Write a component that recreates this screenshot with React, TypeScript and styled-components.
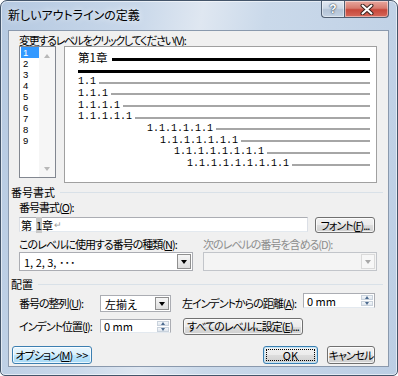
import React from 'react'
import styled, { createGlobalStyle, css } from 'styled-components'

const UI_FONT = `"Noto Sans CJK JP", "Noto Sans", sans-serif`

const GlobalStyle = createGlobalStyle`
  html, body { margin: 0; padding: 0; background: #ffffff; }
  body { font-family: ${UI_FONT}; font-feature-settings: "palt"; color: #000; }
  * { box-sizing: border-box; }
`

const Window = styled.div`
  width: 398px;
  height: 376px;
  display: flex;
  flex-direction: column;
  border: 1px solid #44556a;
  border-radius: 7px 7px 5px 5px;
  background: linear-gradient(100deg, #b5c9e1 0%, #c9d8ea 30%, #dfe7f1 44%, #cad9ea 58%, #bccee4 100%);
  box-shadow: inset 0 0 0 1px rgba(255, 255, 255, 0.55);
  overflow: hidden;
`

const TitleBar = styled.div`
  height: 29px;
  flex-shrink: 0;
  display: flex;
  align-items: flex-start;
`

const Title = styled.div`
  flex: 1;
  padding-left: 7px;
  line-height: 28px;
  font-size: 12px;
  text-shadow: 0 0 6px rgba(255, 255, 255, 0.95);
`

const CaptionButtons = styled.div`
  display: flex;
  margin-right: 8px;
`

const CaptionButton = styled.div<{ $w: number; $close?: boolean }>`
  width: ${p => p.$w}px;
  height: 17px;
  display: flex;
  align-items: center;
  justify-content: center;
  border: 1px solid #505f72;
  border-top: none;
  ${p =>
    p.$close
      ? css`
          border-radius: 0 0 4px 0;
          background: linear-gradient(#e8a89f 0%, #d77b6e 45%, #c7473a 55%, #d6685a 100%);
        `
      : css`
          border-right: none;
          border-radius: 0 0 0 4px;
          background: linear-gradient(#e2e9f2 0%, #ccd8e6 45%, #b3c3d6 55%, #c3d2e3 100%);
        `}
  box-shadow: inset 0 0 0 1px rgba(255, 255, 255, 0.45);
`

const HelpGlyph = styled.span`
  font-family: "Liberation Sans", sans-serif;
  font-weight: bold;
  font-size: 12px;
  line-height: 1;
  color: #fff;
  text-shadow: 0 0 1px #2b3a4c, 0 0 2px #2b3a4c;
`

const Client = styled.div`
  flex: 1;
  margin: 0 8px 8px 7px;
  border: 1px solid #8a99ad;
  background: #f0f0f0;
  padding: 0 11px 0 10px;
  display: flex;
  flex-direction: column;
  font-size: 11px;
  letter-spacing: -1px;
`

const Label = styled.div<{ $disabled?: boolean }>`
  height: 12px;
  line-height: 12px;
  font-size: 11px;
  white-space: nowrap;
  color: ${p => (p.$disabled ? '#8d8d8d' : '#000')};
`

const TopLabel = styled(Label)`
  margin-top: 3px;
  letter-spacing: -1.3px;
`

const LevelRow = styled.div`
  display: flex;
  align-items: flex-start;
  gap: 8px;
  height: 137px;
`

const ListBox = styled.div`
  width: 37px;
  height: 132px;
  border: 1px solid #828790;
  background: #fff;
  display: flex;
`

const ListItems = styled.div`
  flex: 1;
  padding: 0 0 0 1px;
`

const ListItem = styled.div<{ $selected?: boolean }>`
  height: 11px;
  line-height: 11px;
  padding-left: 2px;
  font-family: "Liberation Sans", sans-serif;
  font-size: 9.5px;
  letter-spacing: 0;
  background: ${p => (p.$selected ? '#3399ff' : 'transparent')};
  color: ${p => (p.$selected ? '#fff' : '#000')};
`

const ScrollTrack = styled.div`
  width: 16px;
  display: flex;
  flex-direction: column;
  justify-content: space-between;
  background: #f6f6f6;
`

const ScrollBtn = styled.div`
  height: 17px;
  display: flex;
  align-items: center;
  justify-content: center;
`

const Tri = styled.span<{ $dir: 'up' | 'down'; $size?: number; $color?: string }>`
  width: 0;
  height: 0;
  border-left: ${p => p.$size ?? 3}px solid transparent;
  border-right: ${p => p.$size ?? 3}px solid transparent;
  ${p =>
    p.$dir === 'up'
      ? css`border-bottom: ${(p.$size ?? 3) + 1}px solid ${p.$color ?? '#b8b8b8'};`
      : css`border-top: ${(p.$size ?? 3) + 1}px solid ${p.$color ?? '#b8b8b8'};`}
`

const Preview = styled.div`
  flex: 1;
  height: 137px;
  border: 1px solid #a0a0a0;
  background: #fff;
  padding: 6px 6px 0 13px;
  display: flex;
  flex-direction: column;
  letter-spacing: 0;
`

const PreviewRow = styled.div<{ $indent: number }>`
  height: 11.7px;
  display: flex;
  align-items: center;
  padding-left: ${p => p.$indent}px;
`

const Num = styled.span`
  font-family: "Liberation Mono", monospace;
  font-size: 10px;
  line-height: 1;
  margin-right: 3px;
  color: #000;
  white-space: nowrap;
`

const Chapter = styled.span`
  font-size: 11.5px;
  line-height: 1;
  margin-right: 5px;
  margin-top: -2px;
  letter-spacing: 0;
`

const Rule = styled.div<{ $dark?: boolean }>`
  flex: 1;
  height: ${p => (p.$dark ? 3 : 2)}px;
  margin-top: 1px;
  background: ${p => (p.$dark ? '#000' : '#a6a6a6')};
`

const Heading = styled.div<{ $top: number }>`
  display: flex;
  align-items: center;
  gap: 5px;
  height: 12px;
  margin: ${p => p.$top}px -6px 0 -8px;
  font-size: 11px;
  letter-spacing: 0;
`

const HeadingLine = styled.div`
  flex: 1;
  height: 1px;
  background: #d9e1e8;
`

const FieldLabel = styled(Label)`
  margin-top: 3px;
`

const InputRow = styled.div`
  margin-top: 4px;
  display: flex;
  align-items: flex-start;
  gap: 7px;
`

const TextBox = styled.div<{ $w: number; $h: number }>`
  width: ${p => p.$w}px;
  height: ${p => p.$h}px;
  border: 1px solid #abadb3;
  border-left-color: #dbdfe6;
  border-right-color: #dbdfe6;
  border-bottom-color: #e3e9ef;
  background: #fff;
  display: flex;
  align-items: center;
  padding-left: 1px;
  font-size: 11px;
  letter-spacing: 0;
  white-space: nowrap;
`

const FieldMark = styled.span`
  background: #c8c8c8;
  margin-left: 4px;
`

const ReturnMark = styled.span`
  color: #9a9a9a;
  font-size: 9px;
  margin-left: 1px;
`

const PushButton = styled.button<{ $w: number; $h?: number; $variant?: 'hot' | 'default' }>`
  width: ${p => p.$w}px;
  height: ${p => p.$h ?? 18}px;
  padding: 0;
  border: 1px solid #707070;
  border-radius: 3px;
  background: linear-gradient(#f2f2f2 0%, #ebebeb 50%, #dddddd 51%, #cfcfcf 100%);
  box-shadow: inset 0 0 0 1px rgba(255, 255, 255, 0.75);
  font-family: ${UI_FONT};
  font-feature-settings: "palt";
  font-size: 11px;
  letter-spacing: -1px;
  line-height: 1;
  color: #000;
  white-space: nowrap;
  ${p =>
    p.$variant === 'hot' &&
    css`
      border-color: #3c7fb1;
      background: linear-gradient(#eaf6fd 0%, #d9f0fc 50%, #bee6fd 51%, #a7d9f5 100%);
    `}
  ${p =>
    p.$variant === 'default' &&
    css`
      border-color: #3c7fb1;
      box-shadow: inset 0 0 0 1px #c4e5f6;
      outline: 1px dotted #000;
      outline-offset: -4px;
      letter-spacing: 0;
    `}
`

const Arrows = styled.span`
  margin-left: 4px;
  letter-spacing: 0;
`

const ComboGrid = styled.div`
  margin-top: 5px;
  display: grid;
  grid-template-columns: 174px 174px;
  grid-template-rows: 12px 19px;
  column-gap: 10px;
  row-gap: 2px;
`

const Combo = styled.div<{ $w?: number; $h: number; $disabled?: boolean }>`
  width: ${p => (p.$w ? `${p.$w}px` : '100%')};
  height: ${p => p.$h}px;
  display: flex;
  border: 1px solid ${p => (p.$disabled ? '#c2c5ca' : '#abadb3')};
  background: ${p => (p.$disabled ? '#f4f4f4' : '#fff')};
`

const ComboText = styled.div<{ $pad: number }>`
  flex: 1;
  display: flex;
  align-items: center;
  padding-left: ${p => p.$pad}px;
  font-size: 11px;
  letter-spacing: 0;
  white-space: nowrap;
`

const DropButton = styled.div<{ $disabled?: boolean }>`
  width: 14px;
  margin: 1px;
  display: flex;
  align-items: center;
  justify-content: center;
  border: 1px solid ${p => (p.$disabled ? '#dadada' : '#8f8f8f')};
  background: ${p => (p.$disabled ? '#f7f7f7' : 'linear-gradient(#f6f6f6, #dedede)')};
`

const SpinBox = styled.div<{ $w: number; $h: number }>`
  width: ${p => p.$w}px;
  height: ${p => p.$h}px;
  display: flex;
  border: 1px solid #abadb3;
  border-bottom-color: #e3e9ef;
  background: #fff;
`

const SpinButtons = styled.div`
  width: 12px;
  margin: 1px;
  display: flex;
  flex-direction: column;
  gap: 1px;
`

const SpinHalf = styled.div`
  flex: 1;
  display: flex;
  align-items: center;
  justify-content: center;
  background: linear-gradient(#f4f7fa, #dfe6ee);
  border: 1px solid #c9d2dc;
`

const PlacementGrid = styled.div`
  margin-top: 3px;
  display: grid;
  grid-template-columns: 81px 71px 132px 72px;
  grid-template-rows: 19px 18px;
  row-gap: 5px;
  align-items: center;
`

const Cell = styled.div<{ $pad?: number; $align?: 'start' | 'end' | 'center' }>`
  padding-left: ${p => p.$pad ?? 0}px;
  align-self: ${p => p.$align ?? 'center'};
  display: flex;
`

const BottomRow = styled.div`
  margin: 11px 2px 0 -7px;
  display: flex;
  align-items: center;
  gap: 9px;
`

const Spacer = styled.div`
  flex: 1;
`

const levels = [
  { text: '1.1', indent: 0 },
  { text: '1.1.1', indent: 0 },
  { text: '1.1.1.1', indent: 0 },
  { text: '1.1.1.1.1', indent: 0 },
  { text: '1.1.1.1.1.1', indent: 69 },
  { text: '1.1.1.1.1.1.1', indent: 82 },
  { text: '1.1.1.1.1.1.1.1', indent: 96 },
  { text: '1.1.1.1.1.1.1.1.1', indent: 109 },
]

const Spin: React.FC<{ w: number; h: number; value: string }> = ({ w, h, value }) => (
  <SpinBox $w={w} $h={h}>
    <ComboText $pad={3}>{value}</ComboText>
    <SpinButtons>
      <SpinHalf>
        <Tri $dir="up" $size={2} $color="#4d6b8f" />
      </SpinHalf>
      <SpinHalf>
        <Tri $dir="down" $size={2} $color="#4d6b8f" />
      </SpinHalf>
    </SpinButtons>
  </SpinBox>
)

const App: React.FC = () => {
  return (
    <>
      <GlobalStyle />
      <Window>
        <TitleBar>
          <Title>新しいアウトラインの定義</Title>
          <CaptionButtons>
            <CaptionButton $w={23}>
              <HelpGlyph>?</HelpGlyph>
            </CaptionButton>
            <CaptionButton $w={45} $close>
              <svg width="14" height="11" viewBox="0 0 14 11">
                <path d="M2.5 1.5 L11.5 9.5 M11.5 1.5 L2.5 9.5" stroke="#3a2420" strokeWidth="4" strokeLinecap="round" />
                <path d="M2.5 1.5 L11.5 9.5 M11.5 1.5 L2.5 9.5" stroke="#ffffff" strokeWidth="2" strokeLinecap="round" />
              </svg>
            </CaptionButton>
          </CaptionButtons>
        </TitleBar>

        <Client>
          <TopLabel>
            変更するレベルをクリックしてください(<u>V</u>):
          </TopLabel>
          <LevelRow>
            <ListBox>
              <ListItems>
                {[1, 2, 3, 4, 5, 6, 7, 8, 9].map(n => (
                  <ListItem key={n} $selected={n === 1}>
                    {n}
                  </ListItem>
                ))}
              </ListItems>
              <ScrollTrack>
                <ScrollBtn>
                  <Tri $dir="up" />
                </ScrollBtn>
                <ScrollBtn>
                  <Tri $dir="down" />
                </ScrollBtn>
              </ScrollTrack>
            </ListBox>
            <Preview>
              <PreviewRow $indent={0}>
                <Chapter>第1章</Chapter>
                <Rule $dark />
              </PreviewRow>
              <PreviewRow $indent={0}>
                <Rule $dark />
              </PreviewRow>
              {levels.map(l => (
                <PreviewRow key={l.text} $indent={l.indent}>
                  <Num>{l.text}</Num>
                  <Rule />
                </PreviewRow>
              ))}
            </Preview>
          </LevelRow>

          <Heading $top={3}>
            番号書式
            <HeadingLine />
          </Heading>
          <FieldLabel>
            番号書式(<u>O</u>):
          </FieldLabel>
          <InputRow>
            <TextBox $w={289} $h={15}>
              第<FieldMark>1</FieldMark>章<ReturnMark>↵</ReturnMark>
            </TextBox>
            <PushButton $w={60} $h={16}>
              フォント(<u>F</u>)...
            </PushButton>
          </InputRow>

          <ComboGrid>
            <Label>
              このレベルに使用する番号の種類(<u>N</u>):
            </Label>
            <Label $disabled>次のレベルの番号を含める(D):</Label>
            <Combo $h={19}>
              <ComboText $pad={4}>1, 2, 3, ･･･</ComboText>
              <DropButton>
                <Tri $dir="down" $color="#000" />
              </DropButton>
            </Combo>
            <Combo $h={19} $disabled>
              <ComboText $pad={4} />
              <DropButton $disabled>
                <Tri $dir="down" $color="#a8a8a8" />
              </DropButton>
            </Combo>
          </ComboGrid>

          <Heading $top={7}>
            配置
            <HeadingLine />
          </Heading>
          <PlacementGrid>
            <Label>
              番号の整列(<u>U</u>):
            </Label>
            <Cell $align="end">
              <Combo $w={71} $h={17}>
                <ComboText $pad={4}>左揃え</ComboText>
                <DropButton>
                  <Tri $dir="down" $color="#000" />
                </DropButton>
              </Combo>
            </Cell>
            <Cell $pad={11}>
              <Label>
                左インデントからの距離(<u>A</u>):
              </Label>
            </Cell>
            <Cell $align="start">
              <Spin w={72} h={15} value="0 mm" />
            </Cell>

            <Label>
              インデント位置(<u>I</u>):
            </Label>
            <Cell>
              <Spin w={71} h={14} value="0 mm" />
            </Cell>
            <Cell $pad={12}>
              <PushButton $w={120} $h={17}>
                すべてのレベルに設定(<u>E</u>)...
              </PushButton>
            </Cell>
            <div />
          </PlacementGrid>

          <BottomRow>
            <PushButton $w={80} $variant="hot">
              オプション(<u>M</u>)<Arrows>&gt;&gt;</Arrows>
            </PushButton>
            <Spacer />
            <PushButton $w={55} $variant="default">
              OK
            </PushButton>
            <PushButton $w={48}>キャンセル</PushButton>
          </BottomRow>
        </Client>
      </Window>
    </>
  )
}

export default App
